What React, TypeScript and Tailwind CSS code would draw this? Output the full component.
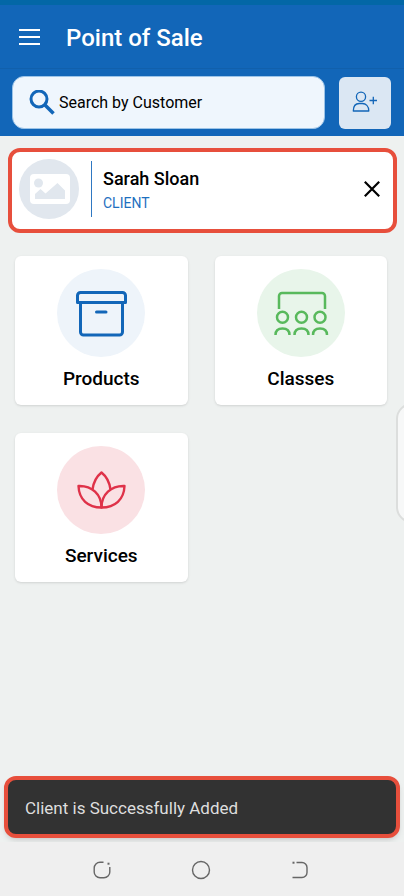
import type { ReactNode } from "react";

const ProductsIcon = () => (
  <svg viewBox="0 0 88 88" className="size-full" fill="none" stroke="#1266b8" strokeWidth="3" strokeLinejoin="round" strokeLinecap="round">
    <path d="M20.500 33.500V26.500a3 3 0 0 1 3-3h42a3 3 0 0 1 3 3v7Z" />
    <path d="M23.500 34v29a3 3 0 0 0 3 3h36a3 3 0 0 0 3-3V34" />
    <path d="M39.500 43h9.500" />
  </svg>
);

const ClassesIcon = () => (
  <svg viewBox="0 0 88 88" className="size-full" fill="none" stroke="#58b95c" strokeWidth="2.5">
    <path d="M22 40V27a3 3 0 0 1 3-3h40a3 3 0 0 1 3 3v13" />
    {[25.5, 44.5, 63].map((x) => (
      <g key={x}>
        <circle cx={x} cy="48.300" r="5.500" />
        <path d={`M${x - 7} 66c0-4 2.500-6.500 7-6.500s7 2.500 7 6.500`} />
      </g>
    ))}
  </svg>
);

const ServicesIcon = () => (
  <svg viewBox="0 0 88 88" className="size-full" fill="none" stroke="#df3249" strokeWidth="2.4" strokeLinejoin="round">
    <path d="M35.500 43.500C36.500 36 39.500 30.500 44.500 26.500C49.500 30.500 52.500 36 53.500 43.500" />
    <path d="M44.500 61.500C44.500 48.500 35 39.500 21.500 40C22 53.500 31 61.500 44.500 61.500Z" />
    <path d="M44.500 61.500C44.500 48.500 54 39.500 67.500 40C67 53.500 58 61.500 44.500 61.500Z" />
  </svg>
);

interface CategoryCardProps {
  label: string;
  circle: string;
  children: ReactNode;
}

const CategoryCard = ({ label, circle, children }: CategoryCardProps) => (
  <button
    type="button"
    className="flex flex-col items-center rounded-md bg-white pt-[13px] pb-3 shadow-sm"
  >
    <span className={`size-[88px] rounded-full ${circle}`}>{children}</span>
    <span className="mt-2 text-[19px] leading-7 font-medium text-black">{label}</span>
  </button>
);

const App = () => {
  return (
    <div className="relative flex min-h-screen flex-col overflow-hidden bg-[#eef1f0] font-['Roboto',sans-serif] text-black">
      {/* Header */}
      <header className="border-t-[5px] border-[#0367a6] bg-[#1266b8]">
        <div className="flex h-16 items-center gap-6 border-b border-[#1160ac] px-[18px]">
          <button type="button" aria-label="Menu" className="w-6">
            <svg viewBox="0 0 24 18" className="h-[18px] w-6" stroke="white" strokeWidth="2">
              <path d="M1 2h21M1 9h21M1 16h21" />
            </svg>
          </button>
          <h1 className="pt-[3px] text-2xl leading-8 font-medium text-white">Point of Sale</h1>
        </div>

        <div className="flex items-center gap-[14px] pt-[7px] pr-[13px] pb-[7px] pl-3">
          <label className="flex h-[53px] flex-1 items-center gap-1 rounded-xl border border-[#9cc4e8] bg-[#eff6fd] pl-4">
            <svg viewBox="0 0 26 26" className="size-[26px]" fill="none" stroke="#1266b8">
              <circle cx="10" cy="9" r="8" strokeWidth="3" />
              <path d="m16 15 8.500 8.500" strokeWidth="3.500" />
            </svg>
            <input
              type="text"
              aria-label="Search by Customer"
              placeholder="Search by Customer"
              className="w-full min-w-0 flex-1 bg-transparent pt-px text-base outline-none placeholder:text-black"
            />
          </label>
          <button
            type="button"
            aria-label="Add customer"
            className="h-[52px] w-[52px] rounded-md bg-[#dbe7f3]"
          >
            <svg viewBox="0 0 52 52" className="size-full" fill="none" stroke="#1266b8" strokeWidth="1.300" strokeLinejoin="round">
              <circle cx="22" cy="19.800" r="4.600" />
              <path d="M14.300 34c0-5 2.500-7.500 6-7.500h3c3.500 0 6.500 2.500 6.500 7.500Z" />
              <path d="M34.300 19.800v7.500M30.500 23.500h7.500" />
            </svg>
          </button>
        </div>
      </header>

      <main className="flex flex-1 flex-col">
        {/* Selected client */}
        <section className="mt-3 mr-[7px] ml-2 flex h-[85px] items-center rounded-xl border-4 border-[#e74f3c] bg-white pr-3 pb-[3px] pl-[7px]">
          <svg viewBox="0 0 60 60" className="size-[60px]">
            <circle cx="30" cy="30" r="30" fill="#e1e7ee" />
            <rect x="11" y="15" width="40" height="30" rx="4" fill="white" />
            <circle cx="19.500" cy="24" r="4.500" fill="#e1e7ee" />
            <path d="M16 40v-5l5.500-5 5 4.500 12-10.500 7.500 7.500V40Z" fill="#e1e7ee" />
          </svg>
          <div className="ml-3 flex h-14 flex-1 flex-col justify-center border-l border-l-[#2f78c2] pt-1 pl-[11px]">
            <p className="text-lg leading-6 font-medium">Sarah Sloan</p>
            <p className="text-sm leading-6 text-[#1f70bf]">CLIENT</p>
          </div>
          <button type="button" aria-label="Remove client">
            <svg viewBox="0 0 18 18" className="size-[18px]" stroke="black" strokeWidth="2.200">
              <path d="m1.800 1.800 14.400 14.400M16.200 1.800l-14.400 14.400" />
            </svg>
          </button>
        </section>

        {/* Categories */}
        <div className="grid grid-cols-2 gap-x-[27px] gap-y-7 pt-[23px] pr-[17px] pl-[15px]">
          <CategoryCard label="Products" circle="bg-[#eef4fa]">
            <ProductsIcon />
          </CategoryCard>
          <CategoryCard label="Classes" circle="bg-[#e8f5ea]">
            <ClassesIcon />
          </CategoryCard>
          <CategoryCard label="Services" circle="bg-[#fae1e4]">
            <ServicesIcon />
          </CategoryCard>
        </div>

        {/* Toast */}
        <div
          role="status"
          className="mx-1 mt-auto mb-1 flex h-[62px] items-center rounded-xl border-4 border-[#e74f3c] bg-[#323232] px-[17px] pt-px text-[17px] leading-6 text-[#dedede] shadow-md"
        >
          Client is Successfully Added
        </div>
      </main>

      {/* Edge panel handle */}
      <div className="absolute top-[403px] -right-6 h-[120px] w-8 rounded-2xl border-2 border-[#dcdedd] bg-[#f7f8f8]" />

      {/* System navigation */}
      <nav className="relative flex h-[54px] items-center justify-center gap-[79px] bg-[#efefef] pt-px pr-[2px]">
        <button type="button" aria-label="Recent apps">
          <svg viewBox="0 0 20 20" className="size-5" fill="none" stroke="#666" strokeWidth="1.400">
            <path d="M11.500 2.200H8a5.800 5.800 0 0 0-5.800 5.800v4A5.800 5.800 0 0 0 8 17.800h4a5.800 5.800 0 0 0 5.800-5.800V7" />
            <path d="M15.500 3.700h2" strokeWidth="2" />
          </svg>
        </button>
        <button type="button" aria-label="Home">
          <svg viewBox="0 0 20 20" className="size-5" fill="none" stroke="#666" strokeWidth="1.400">
            <circle cx="10" cy="10" r="8.500" />
          </svg>
        </button>
        <button type="button" aria-label="Back">
          <svg viewBox="0 0 20 20" className="size-5" fill="none" stroke="#666" strokeWidth="1.400">
            <path d="M6.500 2.500H12a5 5 0 0 1 5 5v5a5 5 0 0 1-5 5H2.500" />
            <path d="M2.500 2.700h2" strokeWidth="2" />
          </svg>
        </button>
      </nav>
    </div>
  );
};

export default App;
